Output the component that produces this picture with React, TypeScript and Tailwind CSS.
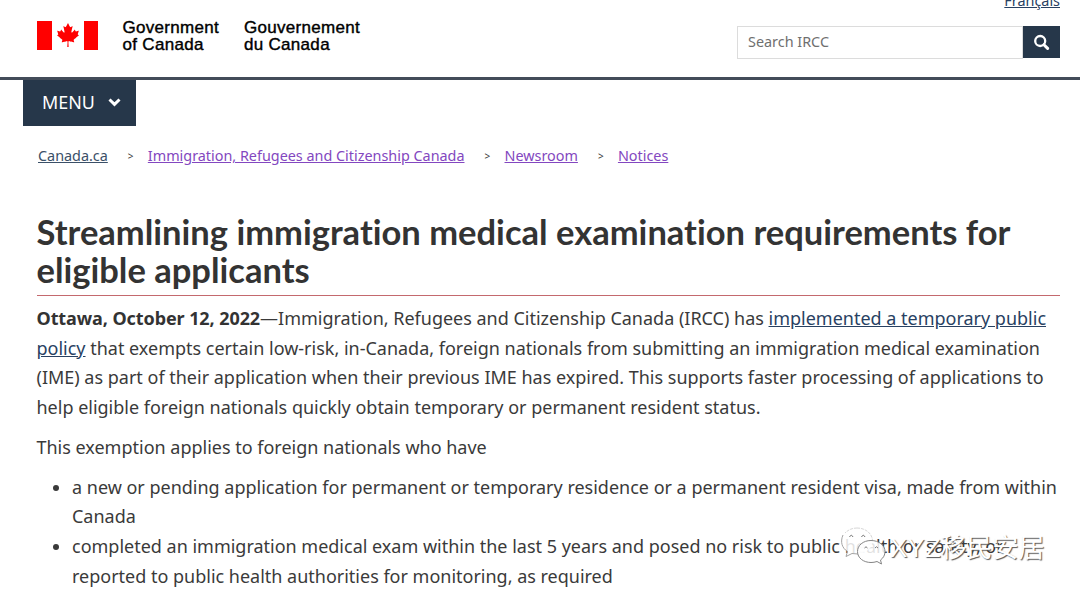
import { FaCanadianMapleLeaf } from 'react-icons/fa';

const crumbs = [
  { label: 'Immigration, Refugees and Citizenship Canada' },
  { label: 'Newsroom' },
  { label: 'Notices' },
];

function Signature() {
  return (
    <div className="flex items-start">
      <div className="mt-[20.5px] flex h-[29.5px] w-[61px] items-center justify-between">
        <div className="h-full w-[14.5px] bg-[#ff0000]" />
        <FaCanadianMapleLeaf className="h-[26px] w-[24px] text-[#ff0000]" />
        <div className="h-full w-[14.5px] bg-[#ff0000]" />
      </div>
      <div className="mt-[19px] ml-[24.5px] flex font-['Liberation_Sans',Arial,sans-serif] text-[17px] leading-[17px] tracking-[0.3px] whitespace-nowrap text-black [-webkit-text-stroke:0.4px_black]">
        <div className="w-[121.5px]">
          Government
          <br />
          of Canada
        </div>
        <div>
          Gouvernement
          <br />
          du Canada
        </div>
      </div>
    </div>
  );
}

function SearchBox() {
  return (
    <div className="flex w-[323px] flex-col items-end">
      <a className="-mt-[9px] h-[20px] text-[14.4px] leading-[20px] text-[#284162] underline">Français</a>
      <div className="mt-[15px] flex h-[33px] w-full">
        <div className="flex-1 border border-[#dcdcdc] pl-[10px] text-[14.4px] leading-[30px] text-[#6f6f6f]">
          Search IRCC
        </div>
        <button className="flex h-[32px] w-[37px] items-center justify-center bg-[#26374a]">
          <svg className="h-[16px] w-[16px]" viewBox="0 0 16 16" fill="none" stroke="white">
            <circle cx="6.2" cy="7" r="5" strokeWidth="2.3" />
            <path d="M9.9 10.7 L13.6 14.4" strokeWidth="3" strokeLinecap="round" />
          </svg>
        </button>
      </div>
    </div>
  );
}

function Watermark() {
  return (
    <div className="absolute top-[524px] left-[840px] flex">
      <svg className="h-[42px] w-[48px]" viewBox="0 0 48 42" fill="white" fillOpacity="0.85">
        <path d="M17 4 C8 4 1.5 10 1.5 17 C1.5 21.5 4 25 7.5 27.5 L6 32.5 L12 29.5 C14 30 16 30.2 18 30 C27 29 32.5 23.5 32.5 17 C32.5 10 26 4 17 4Z" />
        <path
          d="M17 4 C26 4 32.5 10 32.5 17 M17 4 C12 4 8 6 5 9"
          fill="none"
          stroke="#ccc"
          strokeWidth="0.8"
          strokeDasharray="3 1"
        />
        <path d="M3 11 C0 18 2 24 7.5 27.5 L6 32.5 L12 29.5 L18 30" fill="none" stroke="#999" strokeWidth="0.9" />
        <path
          d="M31 16.5 C23 16.5 17.5 21.5 17.5 27.5 C17.5 34 23.5 38.5 31 38.5 C33 38.5 35 38.2 37 37.5 L41.5 40 L40.5 36 C43.5 33.8 45 31 45 27.5 C45 21.5 39 16.5 31 16.5Z"
          stroke="#858585"
          strokeWidth="1"
        />
        <path d="M9.5 13 Q11.3 9.5 13 13 M21.5 13 Q23.3 9.5 25 13" fill="none" stroke="#777" />
        <path d="M24.5 24 Q26 21.5 27.5 24 M35 24 Q36.5 21.5 38 24" fill="none" stroke="#777" />
      </svg>
      <span className="mt-[7px] ml-[2px] font-['Liberation_Sans','Noto_Sans_CJK_SC',sans-serif] text-[26px] leading-[34px] whitespace-nowrap text-white [text-shadow:1px_1px_1px_#555]">
        XYZ移民安居
      </span>
    </div>
  );
}

export default function App() {
  return (
    <div className="relative h-[596px] w-[1080px] overflow-hidden bg-white font-['Noto_Sans',sans-serif] text-[#3a3a3a]">
      <header className="flex h-[80px] justify-between border-b-[3px] border-[#434c59] pr-[20px] pl-[37px]">
        <Signature />
        <SearchBox />
      </header>

      <button className="ml-[23px] flex h-[46px] w-[113px] items-center bg-[#26374a] pb-[2px] pl-[19px] text-[17.9px] text-white">
        MENU
        <svg className="mt-px ml-[13px] h-[9px] w-[13px]" viewBox="0 0 13 9" fill="none" stroke="white" strokeWidth="3">
          <path d="M1.5 1.5 L6.5 6.3 L11.5 1.5" />
        </svg>
      </button>

      <nav className="mt-[20px] flex h-[20px] items-center pl-[38px] text-[14.38px] leading-[20px] whitespace-nowrap">
        <a className="text-[#3b5068] underline">Canada.ca</a>
        {crumbs.map((c) => (
          <div key={c.label} className="flex items-center">
            <span className="w-[40px] pl-[20px] text-[10px]">&gt;</span>
            <a className="text-[#8347c0] underline">{c.label}</a>
          </div>
        ))}
      </nav>

      <main className="mt-[47px] pr-[20px] pl-[36.5px]">
        <h1 className="h-[82px] font-['Lato',sans-serif] text-[34.53px] leading-[38px] font-bold whitespace-nowrap text-[#333] [font-variant-ligatures:none]">
          Streamlining immigration medical examination requirements for
          <br />
          eligible applicants
        </h1>
        <div className="h-px bg-[#c4696e]" />
        <div className="text-[17.99px] leading-[29.7px] whitespace-nowrap">
          <p className="mt-[8px]">
            <b className="tracking-[-0.08px] text-[#333]">Ottawa, October 12, 2022</b>—Immigration, Refugees and
            Citizenship Canada (IRCC) has{' '}
            <a className="text-[#284162] underline">
              implemented a temporary public
              <br />
              policy
            </a>{' '}
            that exempts certain low-risk, in-Canada, foreign nationals from submitting an immigration medical examination
            <br />
            (IME) as part of their application when their previous IME has expired. This supports faster processing of applications to
            <br />
            help eligible foreign nationals quickly obtain temporary or permanent resident status.
          </p>
          <p className="mt-[10px]">This exemption applies to foreign nationals who have</p>
          <ul className="mt-[10px] list-disc pl-[35.5px]">
            <li>
              a new or pending application for permanent or temporary residence or a permanent resident visa, made from within
              <br />
              Canada
            </li>
            <li>
              completed an immigration medical exam within the last 5 years and posed no risk to public health or safety, or
              <br />
              reported to public health authorities for monitoring, as required
            </li>
          </ul>
        </div>
      </main>
      <Watermark />
    </div>
  );
}
